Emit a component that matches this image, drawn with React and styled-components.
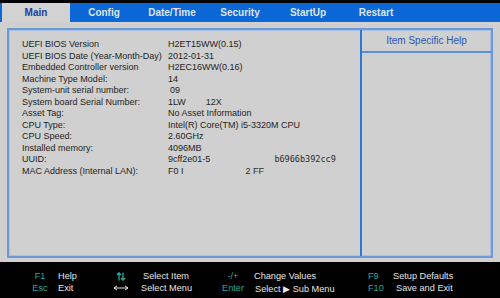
import styled, { createGlobalStyle } from "styled-components";

const GlobalStyle = createGlobalStyle`
  html, body {
    margin: 0;
    padding: 0;
    background: #d0d0d0;
  }
  body {
    font-family: "Liberation Sans", Arial, sans-serif;
  }
`;

const tabs = ["Main", "Config", "Date/Time", "Security", "StartUp", "Restart"];

const rows = [
  { label: "UEFI BIOS Version", value: ["H2ET15WW(0.15)"] },
  { label: "UEFI BIOS Date (Year-Month-Day)", value: ["2012-01-31"] },
  { label: "Embedded Controller version", value: ["H2EC16WW(0.16)"] },
  { label: "Machine Type Model:", value: ["14"] },
  { label: "System-unit serial number:", value: ["09"], shift: 2 },
  { label: "System board Serial Number:", value: ["1LW", "12X"], gap: 20 },
  { label: "Asset Tag:", value: ["No Asset Information"] },
  { label: "CPU Type:", value: ["Intel(R) Core(TM) i5-3320M CPU"] },
  { label: "CPU Speed:", value: ["2.60GHz"] },
  { label: "Installed memory:", value: ["4096MB"] },
  { label: "UUID:", value: ["9cff2e01-5", "b6966b392cc9"], gap: 64, mono: true },
  { label: "MAC Address (Internal LAN):", value: ["F0 I", "2 FF"], gap: 62 },
];

const Screen = () => {
  return (
    <Wrapper>
      <GlobalStyle />
      <TopStrip />
      <TabBar>
        {tabs.map((t, i) => (
          <Tab key={t} $active={i === 0}>
            {t}
          </Tab>
        ))}
      </TabBar>
      <Body>
        <Frame>
          <InfoPanel>
            {rows.map((r) => (
              <InfoRow key={r.label}>
                <span>{r.label}</span>
                <Value $shift={r.shift}>
                  {r.value[0]}
                  {r.value[1] && (
                    <Tail $gap={r.gap} $mono={r.mono}>
                      {r.value[1]}
                    </Tail>
                  )}
                </Value>
              </InfoRow>
            ))}
          </InfoPanel>
          <HelpPanel>
            <HelpTitle>Item Specific Help</HelpTitle>
          </HelpPanel>
        </Frame>
      </Body>
      <Footer>
        <Key>F1</Key>
        <Label $pad={4}>Help</Label>
        <Key>
          <svg width="10" height="9" viewBox="0 0 10 9">
            <path
              d="M3 8.5 V1 M1 3 L3 0.8 L5 3 M7 0.5 V8 M5 6 L7 8.2 L9 6"
              stroke="#26a99b"
              strokeWidth="1.3"
              fill="none"
            />
          </svg>
        </Key>
        <Label $pad={13}>Select Item</Label>
        <Key>-/+</Key>
        <Label $pad={6}>Change Values</Label>
        <Key $left>F9</Key>
        <Label $pad={5}>Setup Defaults</Label>

        <Key>Esc</Key>
        <Label $pad={4}>Exit</Label>
        <Key>
          <svg width="16" height="6" viewBox="0 0 16 6">
            <path
              d="M1 3 H15 M1 3 L4 1 M1 3 L4 5 M15 3 L12 1 M15 3 L12 5"
              stroke="#e6e6e6"
              strokeWidth="1"
              fill="none"
            />
          </svg>
        </Key>
        <Label $pad={11}>Select Menu</Label>
        <Key>Enter</Key>
        <Label $pad={7}>Select ▶ Sub Menu</Label>
        <Key $left>F10</Key>
        <Label $pad={8}>Save and Exit</Label>
      </Footer>
    </Wrapper>
  );
};

export default Screen;

const Wrapper = styled.div`
  width: 500px;
  height: 298px;
  display: flex;
  flex-direction: column;
  background: #d0d0d0;
  overflow: hidden;
`;

const TopStrip = styled.div`
  height: 3px;
  background: #000;
`;

const TabBar = styled.div`
  height: 19px;
  display: flex;
  padding-left: 2px;
  background: #0b66d6;
`;

const Tab = styled.div`
  width: 68px;
  display: flex;
  align-items: center;
  justify-content: center;
  font-size: 10px;
  font-weight: bold;
  color: ${(p) => (p.$active ? "#1d3e9c" : "#dfe5ef")};
  background: ${(p) => (p.$active ? "#d2d2d2" : "transparent")};
`;

const Body = styled.div`
  height: 240px;
  box-sizing: border-box;
  padding: 6px 7px 4px 7px;
`;

const Frame = styled.div`
  height: 100%;
  box-sizing: border-box;
  display: flex;
  border: 2px solid #6d9ad6;
  box-shadow: inset 0 0 0 1px #a9c2e4;
`;

const InfoPanel = styled.div`
  width: 353px;
  box-sizing: border-box;
  padding: 9px 0 0 13px;
  border-right: 2px solid #2c78d6;
`;

const InfoRow = styled.div`
  display: grid;
  grid-template-columns: 146px 1fr;
  font-size: 9px;
  line-height: 11.55px;
  color: #1e1e1e;
  white-space: nowrap;
`;

const Value = styled.span`
  padding-left: ${(p) => p.$shift || 0}px;
`;

const Tail = styled.span`
  margin-left: ${(p) => p.$gap}px;
  font-family: ${(p) =>
    p.$mono ? '"DejaVu Sans Mono", monospace' : "inherit"};
  font-size: ${(p) => (p.$mono ? "8.5px" : "inherit")};
  color: #2a2a2a;
`;

const HelpPanel = styled.div`
  flex: 1;
`;

const HelpTitle = styled.div`
  height: 21px;
  display: flex;
  align-items: center;
  justify-content: center;
  font-size: 10px;
  color: #2d55b4;
  border-bottom: 2px solid #5a90d6;
`;

const Footer = styled.div`
  height: 36px;
  box-sizing: border-box;
  padding: 8px 0 0 26px;
  background: #000;
  display: grid;
  grid-template-columns: 28px 58px 18px 88px 30px 116px 24px 1fr;
  grid-auto-rows: 12px;
  font-size: 9.2px;
  align-items: center;
`;

const Key = styled.span`
  display: flex;
  align-items: center;
  justify-content: ${(p) => (p.$left ? "flex-start" : "center")};
  padding-left: ${(p) => (p.$left ? "4px" : "0")};
  color: #26a99b;
  white-space: nowrap;
`;

const Label = styled.span`
  padding-left: ${(p) => p.$pad || 0}px;
  color: #e6e6e6;
  white-space: nowrap;
`;
